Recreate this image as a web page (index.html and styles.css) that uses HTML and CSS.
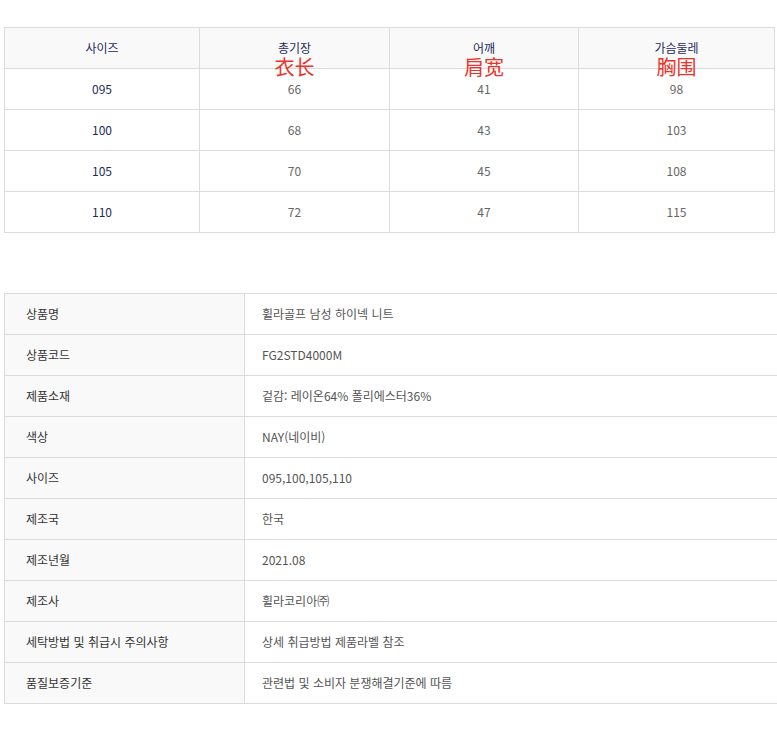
FILE: index.html
```html
<!DOCTYPE html>
<html lang="ko">
<head>
<meta charset="utf-8">
<title>사이즈 및 상품정보</title>
<link rel="stylesheet" href="styles.css">
</head>
<body>
<div class="page">
  <table class="size-table">
    <colgroup>
      <col class="c1"><col class="c2"><col class="c3"><col class="c4">
    </colgroup>
    <thead>
      <tr>
        <th>사이즈</th>
        <th class="anno-cell">총기장<span class="anno">衣长</span></th>
        <th class="anno-cell">어깨<span class="anno">肩宽</span></th>
        <th class="anno-cell">가슴둘레<span class="anno">胸围</span></th>
      </tr>
    </thead>
    <tbody>
      <tr><td class="size">095</td><td>66</td><td>41</td><td>98</td></tr>
      <tr><td class="size">100</td><td>68</td><td>43</td><td>103</td></tr>
      <tr><td class="size">105</td><td>70</td><td>45</td><td>108</td></tr>
      <tr><td class="size">110</td><td>72</td><td>47</td><td>115</td></tr>
    </tbody>
  </table>

  <div class="info-wrap">
    <table class="info-table">
      <colgroup><col class="lab"><col class="val"></colgroup>
      <tbody>
        <tr><th>상품명</th><td>휠라골프 남성 하이넥 니트</td></tr>
        <tr><th>상품코드</th><td>FG2STD4000M</td></tr>
        <tr><th>제품소재</th><td>겉감: 레이온64% 폴리에스터36%</td></tr>
        <tr><th>색상</th><td>NAY(네이비)</td></tr>
        <tr><th>사이즈</th><td>095,100,105,110</td></tr>
        <tr><th>제조국</th><td>한국</td></tr>
        <tr><th>제조년월</th><td>2021.08</td></tr>
        <tr><th>제조사</th><td>휠라코리아㈜</td></tr>
        <tr><th>세탁방법 및 취급시 주의사항</th><td>상세 취급방법 제품라벨 참조</td></tr>
        <tr><th>품질보증기준</th><td>관련법 및 소비자 분쟁해결기준에 따름</td></tr>
      </tbody>
    </table>
  </div>
</div>
</body>
</html>
```
FILE: styles.css
```css
html, body {
  margin: 0;
  padding: 0;
  background: #fff;
  overflow: hidden;
}
body {
  font-family: "Noto Sans CJK KR", "Noto Sans", sans-serif;
  font-size: 12px;
  color: #555;
}
.page {
  padding: 27px 0 0 4px;
}
table {
  border-collapse: collapse;
  table-layout: fixed;
}
.size-table {
  width: 770px;
}
.size-table .c1 { width: 195px; }
.size-table .c2 { width: 190px; }
.size-table .c3 { width: 189px; }
.size-table .c4 { width: 196px; }
.size-table th,
.size-table td {
  border: 1px solid #dcdcdc;
  height: 40px;
  padding: 0;
  text-align: center;
  vertical-align: middle;
  line-height: 16px;
}
.size-table th {
  background: #f9f9f9;
  font-weight: normal;
  color: #1d2b5c;
}
.size-table td {
  color: #666;
}
.size-table td.size {
  color: #1d2b5c;
}
.anno-cell {
  position: relative;
}
.anno {
  position: absolute;
  left: 50%;
  top: 29px;
  transform: translateX(-50%);
  font-family: "Noto Sans CJK SC", sans-serif;
  font-size: 20px;
  line-height: 20px;
  color: #e8352b;
  white-space: nowrap;
}
.info-wrap {
  margin-top: 60px;
  width: 800px;
}
.info-table {
  width: 800px;
}
.info-table .lab { width: 240px; }
.info-table th,
.info-table td {
  border: 1px solid #dcdcdc;
  height: 40px;
  padding: 0;
  text-align: left;
  vertical-align: middle;
  line-height: 16px;
}
.info-table th {
  background: #f9f9f9;
  font-weight: normal;
  color: #333;
  padding-left: 21px;
}
.info-table td {
  color: #555;
  padding-left: 17px;
}
```
